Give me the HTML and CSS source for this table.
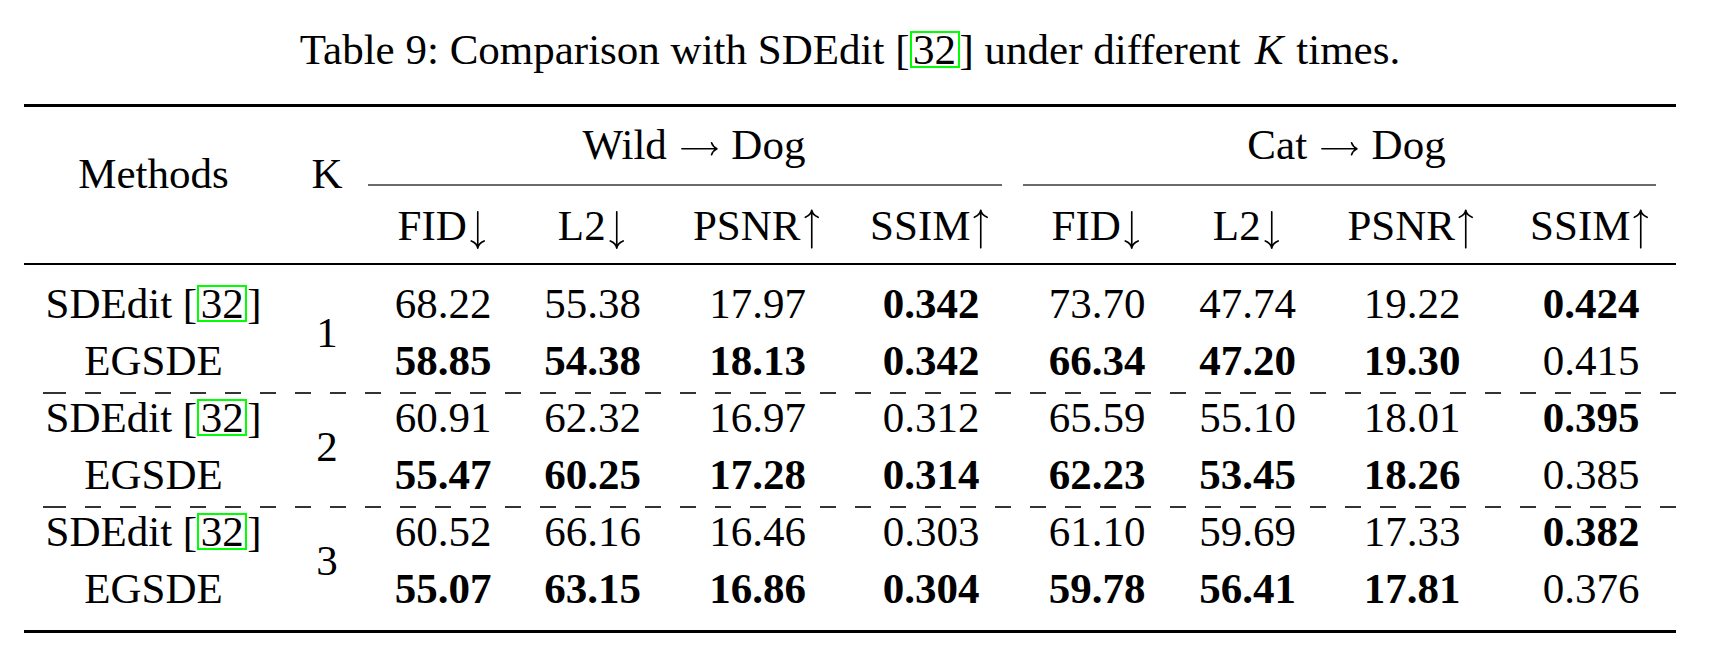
FILE: index.html
```html
<!DOCTYPE html>
<html lang="en">
<head>
<meta charset="utf-8">
<title>Table 9</title>
<link rel="stylesheet" href="styles.css">
</head>
<body>
<div class="page">
  <div class="caption">Table 9: Comparison with SDEdit [<span class="cite">32</span>] under different <i class="mk">K</i>times.</div>
  <div class="table">
    <div class="rule thick"></div>
    <div class="head grid">
      <div class="mh c1">Methods</div>
      <div class="mh c2">K</div>
      <div class="group g1">Wild<svg class="ar" viewBox="0 0 1000 500" aria-label="→"><path d="M90 250H895M905 250C842 220 800 172 780 112M905 250C842 280 800 328 780 388"/></svg>Dog</div>
      <div class="group g2">Cat<svg class="ar" viewBox="0 0 1000 500" aria-label="→"><path d="M90 250H895M905 250C842 220 800 172 780 112M905 250C842 280 800 328 780 388"/></svg>Dog</div>
      <div class="cmid m1"></div>
      <div class="cmid m2"></div>
      <div class="sub">FID<svg class="av" viewBox="0 0 500 890" aria-label="↓"><path d="M250 40V880M250 885C238 815 190 755 100 720M250 885C262 815 310 755 400 720"/></svg></div>
      <div class="sub">L2<svg class="av" viewBox="0 0 500 890" aria-label="↓"><path d="M250 40V880M250 885C238 815 190 755 100 720M250 885C262 815 310 755 400 720"/></svg></div>
      <div class="sub">PSNR<svg class="av" viewBox="0 0 500 890" aria-label="↑"><path d="M250 880V10M250 5C238 75 190 135 100 170M250 5C262 75 310 135 400 170"/></svg></div>
      <div class="sub">SSIM<svg class="av" viewBox="0 0 500 890" aria-label="↑"><path d="M250 880V10M250 5C238 75 190 135 100 170M250 5C262 75 310 135 400 170"/></svg></div>
      <div class="sub">FID<svg class="av" viewBox="0 0 500 890" aria-label="↓"><path d="M250 40V880M250 885C238 815 190 755 100 720M250 885C262 815 310 755 400 720"/></svg></div>
      <div class="sub">L2<svg class="av" viewBox="0 0 500 890" aria-label="↓"><path d="M250 40V880M250 885C238 815 190 755 100 720M250 885C262 815 310 755 400 720"/></svg></div>
      <div class="sub">PSNR<svg class="av" viewBox="0 0 500 890" aria-label="↑"><path d="M250 880V10M250 5C238 75 190 135 100 170M250 5C262 75 310 135 400 170"/></svg></div>
      <div class="sub">SSIM<svg class="av" viewBox="0 0 500 890" aria-label="↑"><path d="M250 880V10M250 5C238 75 190 135 100 170M250 5C262 75 310 135 400 170"/></svg></div>
    </div>
    <div class="rule mid"></div>
    <div class="body">
      <div class="block grid">
        <div class="cell">SDEdit [<span class="cite">32</span>]</div>
        <div class="cell kval">1</div>
        <div class="cell">68.22</div><div class="cell">55.38</div><div class="cell">17.97</div><div class="cell b">0.342</div>
        <div class="cell">73.70</div><div class="cell">47.74</div><div class="cell">19.22</div><div class="cell b">0.424</div>
        <div class="cell">EGSDE</div>
        <div class="cell b">58.85</div><div class="cell b">54.38</div><div class="cell b">18.13</div><div class="cell b">0.342</div>
        <div class="cell b">66.34</div><div class="cell b">47.20</div><div class="cell b">19.30</div><div class="cell">0.415</div>
      </div>
      <div class="dash"></div>
      <div class="block grid">
        <div class="cell">SDEdit [<span class="cite">32</span>]</div>
        <div class="cell kval">2</div>
        <div class="cell">60.91</div><div class="cell">62.32</div><div class="cell">16.97</div><div class="cell">0.312</div>
        <div class="cell">65.59</div><div class="cell">55.10</div><div class="cell">18.01</div><div class="cell b">0.395</div>
        <div class="cell">EGSDE</div>
        <div class="cell b">55.47</div><div class="cell b">60.25</div><div class="cell b">17.28</div><div class="cell b">0.314</div>
        <div class="cell b">62.23</div><div class="cell b">53.45</div><div class="cell b">18.26</div><div class="cell">0.385</div>
      </div>
      <div class="dash"></div>
      <div class="block grid">
        <div class="cell">SDEdit [<span class="cite">32</span>]</div>
        <div class="cell kval">3</div>
        <div class="cell">60.52</div><div class="cell">66.16</div><div class="cell">16.46</div><div class="cell">0.303</div>
        <div class="cell">61.10</div><div class="cell">59.69</div><div class="cell">17.33</div><div class="cell b">0.382</div>
        <div class="cell">EGSDE</div>
        <div class="cell b">55.07</div><div class="cell b">63.15</div><div class="cell b">16.86</div><div class="cell b">0.304</div>
        <div class="cell b">59.78</div><div class="cell b">56.41</div><div class="cell b">17.81</div><div class="cell">0.376</div>
      </div>
    </div>
    <div class="rule thick bottom"></div>
  </div>
</div>
</body>
</html>
```

FILE: styles.css
```css
html, body {
  margin: 0;
  padding: 0;
  background: #ffffff;
}

body {
  font-family: "Liberation Serif", "Times New Roman", serif;
  font-size: 43px;
  color: #000;
}

.page {
  width: 1718px;
  height: 664px;
  overflow: hidden;
}

.caption {
  padding-top: 26px;
  line-height: 48px;
  height: 48px;
  width: 1652px;
  margin-left: 24px;
  text-align: center;
  white-space: nowrap;
}

.caption .mk {
  font-style: italic;
  margin: 0 0.3em 0 0.08em;
}

.cite {
  display: inline-block;
  line-height: 33px;
  padding: 0 1.5px;
  border: 2px solid #00ff00;
}

.ar {
  width: 1em;
  height: 0.5em;
  margin: 0 0.25em;
  vertical-align: 0;
  overflow: visible;
}

.av {
  width: 0.5em;
  height: 0.89em;
  vertical-align: -0.19em;
  overflow: visible;
}

.ar path,
.av path {
  fill: none;
  stroke: #000;
  stroke-width: 38;
  stroke-linecap: round;
}

.table {
  width: 1652px;
  margin-left: 24px;
  margin-top: 30px;
}

.rule {
  background: #000;
}

.rule.thick {
  height: 3px;
}

.rule.mid {
  height: 2px;
  margin-top: 13px;
}

.rule.bottom {
  margin-top: 9px;
}

.grid {
  display: grid;
  grid-template-columns: 259px 88px 144px 155px 175px 172px 160px 141px 188px 170px;
}

.head {
  padding-top: 13px;
  grid-template-rows: 49px 32px 49px;
  line-height: 49px;
  text-align: center;
  white-space: nowrap;
}

.mh {
  grid-row: 1 / 4;
  align-self: start;
  padding-top: 29px;
}

.mh.c1 { grid-column: 1; }
.mh.c2 { grid-column: 2; }

.group.g1 { grid-row: 1; grid-column: 3 / 7; }
.group.g2 { grid-row: 1; grid-column: 7 / 11; }

.cmid {
  grid-row: 2;
  align-self: center;
  height: 2px;
  background: #6b6b6b;
}

.cmid.m1 {
  grid-column: 3 / 7;
  margin-left: -3px;
  margin-right: 15px;
}

.cmid.m2 {
  grid-column: 7 / 11;
  margin-left: 6px;
  margin-right: 20px;
}

.sub {
  grid-row: 3;
}

.body {
  padding-top: 14px;
}

.block {
  grid-auto-rows: 57px;
  text-align: center;
  white-space: nowrap;
}

.cell {
  line-height: 49px;
  align-self: start;
}

.cell.b {
  font-weight: bold;
}

.kval {
  grid-column: 2;
  grid-row: 1 / 3;
  padding-top: 29px;
}

.dash {
  height: 2px;
  margin: -1px 0;
  background: repeating-linear-gradient(to right, #333 0, #333 16px, transparent 16px, transparent 35px);
  background-position: 26px 0;
}
```
